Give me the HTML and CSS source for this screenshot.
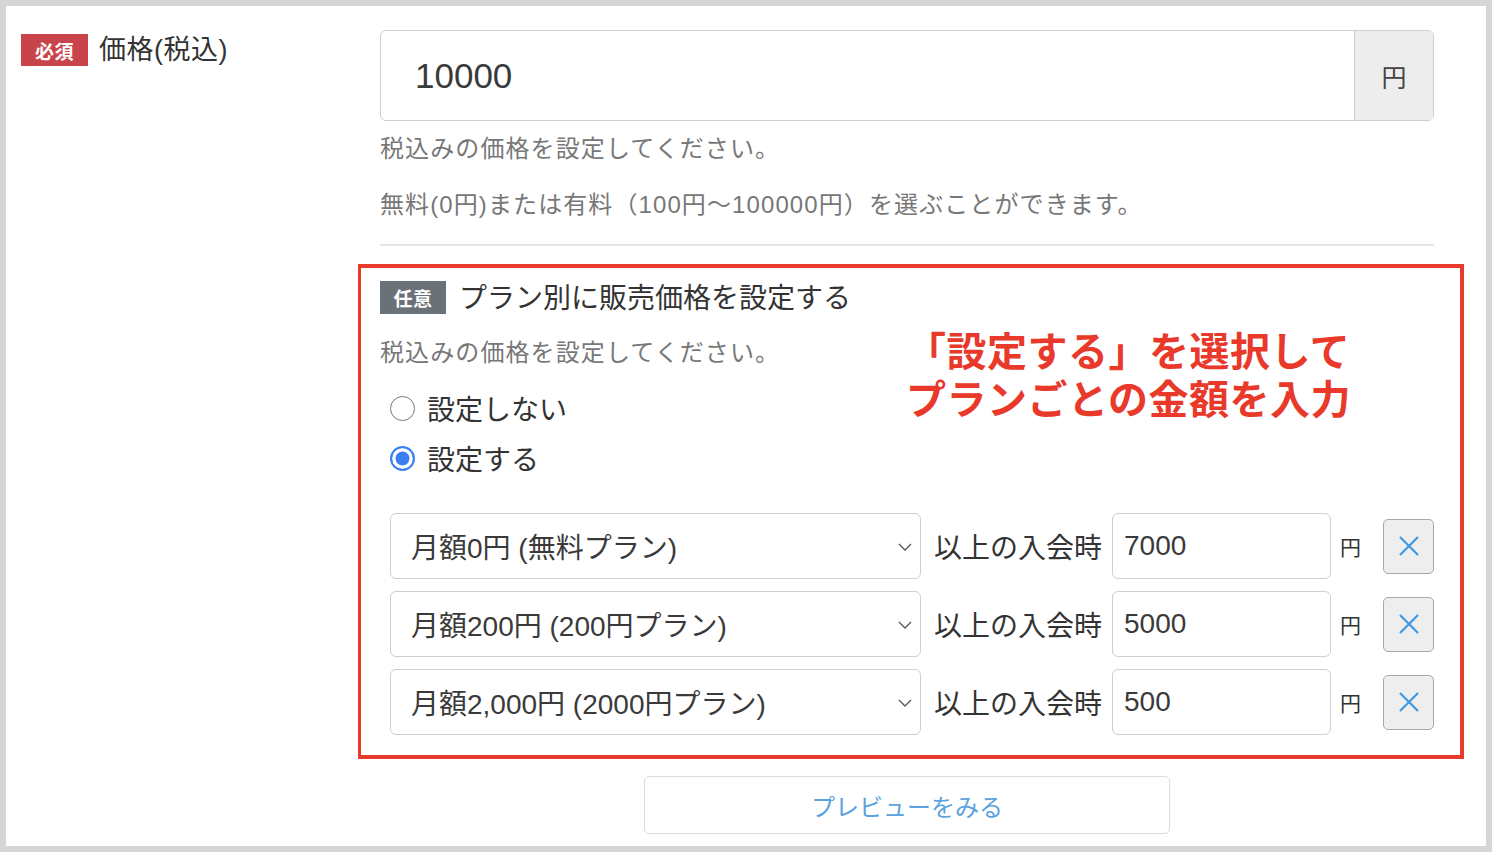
FILE: index.html
```html
<!DOCTYPE html>
<html lang="ja">
<head>
<meta charset="utf-8">
<link rel="stylesheet" href="styles.css">
</head>
<body>
<div class="frame">
  <div class="sheet">
    <div class="field">
      <div class="label-col">
        <span class="badge badge-req">必須</span>
        <span class="label-text">価格(税込)</span>
      </div>
      <div class="content-col">
        <div class="input-group">
          <div class="big-input">10000</div>
          <div class="addon">円</div>
        </div>
        <p class="help help-first">税込みの価格を設定してください。</p>
        <p class="help help-second">無料(0円)または有料（100円〜100000円）を選ぶことができます。</p>
        <div class="divider"></div>

        <div class="plan-box">
          <div class="annotation">「設定する」を選択して<br>プランごとの金額を入力</div>
          <div class="plan-title">
            <span class="badge badge-opt">任意</span>
            <span class="title-text">プラン別に販売価格を設定する</span>
          </div>
          <p class="help help-plan">税込みの価格を設定してください。</p>
          <div class="radio-row radio-first"><span class="radio"></span><span>設定しない</span></div>
          <div class="radio-row"><span class="radio radio-on"></span><span>設定する</span></div>

          <div class="rows">
            <div class="plan-row">
              <div class="select"><span>月額0円 (無料プラン)</span><svg class="chev" width="14" height="8" viewBox="0 0 14 8"><path d="M1 1l6 6 6-6" fill="none" stroke="#555" stroke-width="1.3"/></svg></div>
              <span class="row-label">以上の入会時</span>
              <div class="small-input">7000</div>
              <span class="yen">円</span>
              <div class="del"><svg width="22" height="22" viewBox="0 0 22 22"><path d="M2 2l18 18M20 2L2 20" stroke="#3e98e3" stroke-width="2.2" fill="none"/></svg></div>
            </div>
            <div class="plan-row">
              <div class="select"><span>月額200円 (200円プラン)</span><svg class="chev" width="14" height="8" viewBox="0 0 14 8"><path d="M1 1l6 6 6-6" fill="none" stroke="#555" stroke-width="1.3"/></svg></div>
              <span class="row-label">以上の入会時</span>
              <div class="small-input">5000</div>
              <span class="yen">円</span>
              <div class="del"><svg width="22" height="22" viewBox="0 0 22 22"><path d="M2 2l18 18M20 2L2 20" stroke="#3e98e3" stroke-width="2.2" fill="none"/></svg></div>
            </div>
            <div class="plan-row">
              <div class="select"><span>月額2,000円 (2000円プラン)</span><svg class="chev" width="14" height="8" viewBox="0 0 14 8"><path d="M1 1l6 6 6-6" fill="none" stroke="#555" stroke-width="1.3"/></svg></div>
              <span class="row-label">以上の入会時</span>
              <div class="small-input">500</div>
              <span class="yen">円</span>
              <div class="del"><svg width="22" height="22" viewBox="0 0 22 22"><path d="M2 2l18 18M20 2L2 20" stroke="#3e98e3" stroke-width="2.2" fill="none"/></svg></div>
            </div>
          </div>
        </div>

        <div class="preview-wrap">
          <div class="preview-btn">プレビューをみる</div>
        </div>
      </div>
    </div>
  </div>
</div>
</body>
</html>
```

FILE: styles.css
```css
* { box-sizing: border-box; }
html, body { margin: 0; padding: 0; }
body {
  width: 1492px;
  height: 852px;
  overflow: hidden;
  font-family: "Liberation Sans", "Noto Sans CJK JP", sans-serif;
  color: #333;
  background: #d6d6d6;
}
.frame {
  padding: 6px;
  height: 852px;
}
.sheet {
  background: #fff;
  height: 840px;
  width: 1480px;
  overflow: hidden;
  padding: 24px 52px 0 15px;
}
.field {
  display: grid;
  grid-template-columns: 359px 1054px;
}
.label-col {
  display: flex;
  align-items: center;
  gap: 11px;
  height: 32px;
  margin-top: 4px;
}
.badge {
  display: inline-flex;
  align-items: center;
  justify-content: center;
  color: #fff;
  font-weight: bold;
  font-size: 19px;
  letter-spacing: 0.5px;
}
.badge-req {
  background: #c9434b;
  width: 67px;
  height: 32px;
}
.badge-opt {
  background: #6b7178;
  width: 66px;
  height: 33px;
}
.label-text {
  font-size: 27px;
  letter-spacing: 0.5px;
  color: #333;
  margin-top: -5px;
}
.input-group {
  display: flex;
  height: 91px;
  border: 1.5px solid #cfcfcf;
  border-radius: 6px;
  overflow: hidden;
}
.big-input {
  flex: 1;
  display: flex;
  align-items: center;
  padding-left: 34px;
  font-size: 35px;
  color: #3a3a3a;
}
.addon {
  width: 79px;
  background: #ededed;
  border-left: 1.5px solid #cfcfcf;
  display: flex;
  align-items: center;
  justify-content: center;
  font-size: 25px;
  color: #444;
}
.help {
  margin: 0;
  font-size: 24px;
  line-height: 36px;
  letter-spacing: 1.1px;
  color: #777;
}
.help-first { margin-top: 10px; }
.help-second { margin-top: 20px; }
.divider {
  margin-top: 21px;
  height: 2px;
  background: #e6e6e6;
}
.plan-box {
  position: relative;
  margin: 18px -30px 0 -22px;
  border: 4px solid #e8392b;
  border-left-width: 3px;
  padding: 13px 26px 20px 19px;
}
.annotation {
  position: absolute;
  left: 545px;
  top: 60px;
  width: 470px;
  font-size: 40px;
  line-height: 48px;
  font-weight: bold;
  letter-spacing: 0.5px;
  color: #e8392b;
}
.plan-title {
  display: flex;
  align-items: center;
  gap: 13px;
  height: 33px;
}
.title-text {
  font-size: 28px;
  color: #333;
  margin-top: -4px;
}
.help-plan { margin-top: 21px; }
.radio-row {
  display: flex;
  align-items: center;
  gap: 12px;
  height: 50px;
  padding-left: 10px;
  font-size: 28px;
  color: #333;
}
.radio-first { margin-top: 12px; }
.radio {
  width: 25px;
  height: 25px;
  border-radius: 50%;
  border: 1.5px solid #777;
  background: #fff;
  flex: none;
}
.radio-on {
  border: 2px solid #3b7ff2;
  background: #3b7ff2;
  box-shadow: inset 0 0 0 3.5px #fff;
}
.rows {
  margin-top: 30px;
  padding-left: 10px;
  display: flex;
  flex-direction: column;
  gap: 12px;
}
.plan-row {
  display: flex;
  align-items: center;
  height: 66px;
}
.select {
  position: relative;
  width: 531px;
  height: 66px;
  border: 1.5px solid #cfcfcf;
  border-radius: 6px;
  display: flex;
  align-items: center;
  padding-left: 20px;
  font-size: 28px;
  color: #3a3a3a;
}
.chev {
  position: absolute;
  right: 8px;
  top: 29px;
}
.row-label {
  margin-left: 13px;
  font-size: 28px;
  color: #333;
  width: 166px;
  white-space: nowrap;
}
.small-input {
  margin-left: 12px;
  width: 219px;
  height: 66px;
  border: 1.5px solid #cfcfcf;
  border-radius: 6px;
  display: flex;
  align-items: center;
  padding-left: 11px;
  font-size: 28px;
  color: #3a3a3a;
}
.yen {
  margin-left: 9px;
  font-size: 21px;
  color: #333;
  width: 22px;
}
.del {
  margin-left: 21px;
  width: 51px;
  height: 55px;
  background: #eeeeee;
  border: 1.5px solid #a8a8a8;
  border-radius: 5px;
  display: flex;
  align-items: center;
  justify-content: center;
}
.preview-wrap {
  display: flex;
  justify-content: center;
  margin-top: 17px;
}
.preview-btn {
  width: 526px;
  height: 58px;
  border: 1.5px solid #dcdcdc;
  border-radius: 5px;
  display: flex;
  align-items: center;
  justify-content: center;
  font-size: 24px;
  color: #5aa2e0;
}
```
